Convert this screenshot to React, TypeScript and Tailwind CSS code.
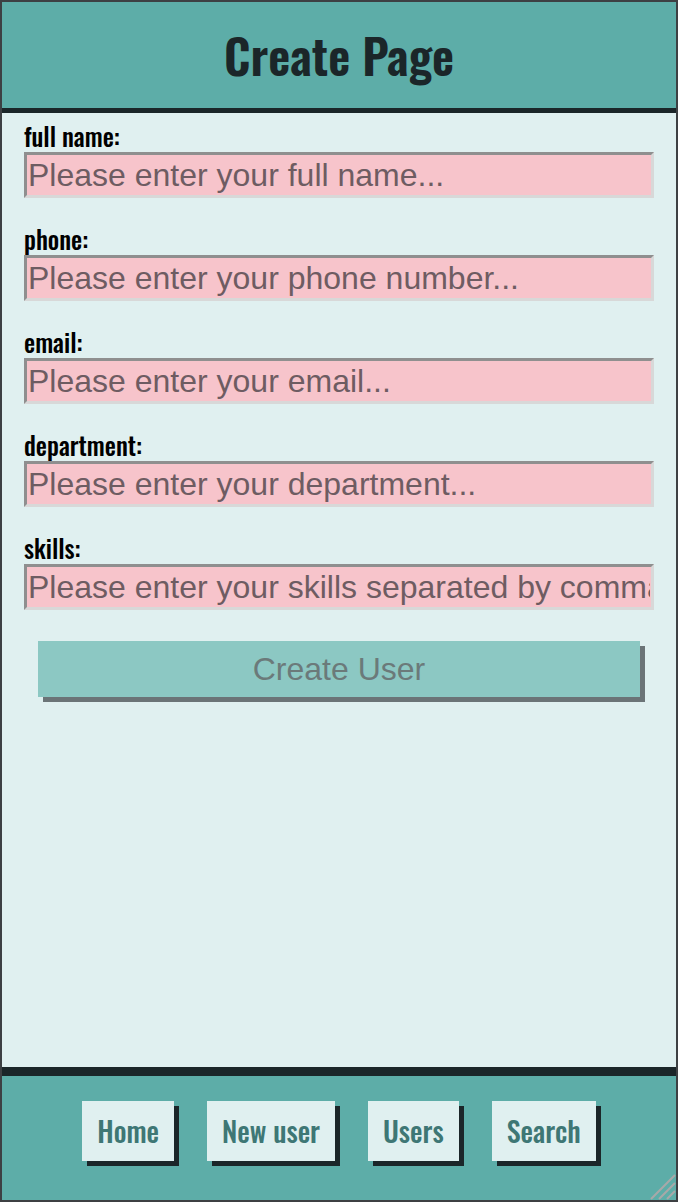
import React from 'react'

const fields = [
  { label: 'full name:', placeholder: 'Please enter your full name...' },
  { label: 'phone:', placeholder: 'Please enter your phone number...' },
  { label: 'email:', placeholder: 'Please enter your email...' },
  { label: 'department:', placeholder: 'Please enter your department...' },
  { label: 'skills:', placeholder: 'Please enter your skills separated by commas...' },
]

const links = ['Home', 'New user', 'Users', 'Search']

function App() {
  return (
    <div className="relative h-[1202px] w-full border-2 border-[#3d4043] bg-[#e0f0f0] flex flex-col overflow-hidden">
      <header className="h-[111px] shrink-0 bg-[#5dada8] border-b-[5px] border-[#1b2629] flex items-center justify-center">
        <h1 className="font-['Oswald','Liberation_Sans_Narrow',sans-serif] font-semibold text-[48px] leading-none text-[#1b2629]">
          Create Page
        </h1>
      </header>

      <main className="flex-1 px-[22px] pt-[9px]">
        <form className="flex flex-col gap-[27px]" onSubmit={(e) => e.preventDefault()}>
          {fields.map((field) => (
            <div key={field.label} className="flex flex-col">
              <label className="h-[30px] font-['Oswald','Liberation_Sans_Narrow',sans-serif] font-medium text-[25px] leading-[28px] text-black">
                {field.label}
              </label>
              <input
                type="text"
                placeholder={field.placeholder}
                className="h-[46px] w-full bg-[#f7c4cb] border-[3px] border-t-[#8f8f8f] border-l-[#8f8f8f] border-b-[#d8d8d8] border-r-[#d8d8d8] px-[1px] font-['Liberation_Sans',sans-serif] text-[32px] text-[#6e5c62] placeholder:text-[#6e5c62] outline-none"
              />
            </div>
          ))}
          <button
            type="submit"
            className="mx-[14px] mt-[4px] h-[56px] bg-[#8cc8c3] shadow-[5px_5px_0_#6b7477] font-['Liberation_Sans',sans-serif] text-[32px] text-[#6b7a7a]"
          >
            Create User
          </button>
        </form>
      </main>

      <footer className="h-[133px] shrink-0 bg-[#5dada8] border-t-[9px] border-[#1b2629] flex items-start justify-center gap-[33px] pt-[25px]">
        {links.map((link) => (
          <a
            key={link}
            href="#"
            className="h-[60px] px-[15px] flex items-center bg-[#e0f0f0] shadow-[5px_5px_0_#1b2629] font-['Oswald','Liberation_Sans_Narrow',sans-serif] font-medium text-[28px] text-[#3e7775]"
          >
            {link}
          </a>
        ))}
      </footer>

      <svg className="absolute right-0 bottom-0" width="27" height="27" viewBox="0 0 27 27">
        <path d="M26 2 L2 26 M26 10 L10 26 M26 18 L18 26" stroke="#a8a8a8" strokeWidth="2" />
      </svg>
    </div>
  )
}

export default App
